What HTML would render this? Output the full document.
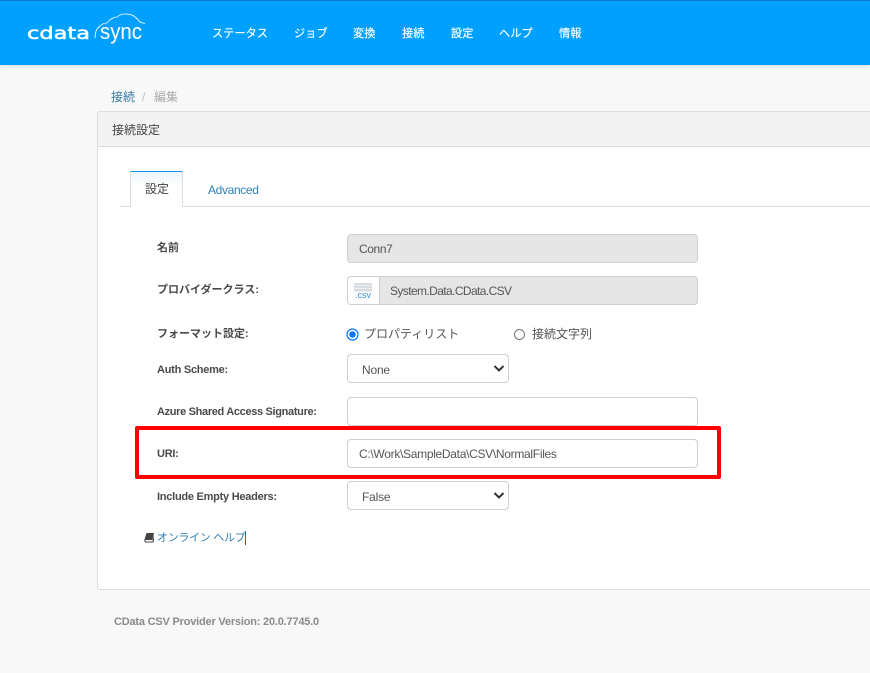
<!DOCTYPE html>
<html lang="ja"><head><meta charset="utf-8"><title>CData Sync</title>
<style>
html,body{margin:0;padding:0}
body{width:870px;height:673px;overflow:hidden;position:relative;background:#f8f8f8;font-family:"Liberation Sans","Noto Sans CJK JP",sans-serif;font-size:12px;color:#444}
.a{position:absolute;white-space:nowrap}
#top{left:0;top:0;width:870px;height:65px;background:#00a0ff;border-top:1px solid #0a78c8;box-sizing:border-box;box-shadow:0 1px 3px rgba(0,0,0,.12)}
.n{top:26px;color:#fff;font-size:11.2px;line-height:16px;-webkit-text-stroke:.15px #fff}
#panel{left:97px;top:111px;width:780px;height:479px;background:#fff;border:1px solid #ddd;border-radius:3px;box-sizing:border-box}
#phead{left:98px;top:112px;width:772px;height:34px;background:#f3f3f3;border-bottom:1px solid #ddd}
.l{left:157px;font-size:11px;font-weight:bold;color:#4a4a4a;line-height:16px}
.e{letter-spacing:-.25px;margin-top:1px}
.f{box-sizing:border-box;border:1px solid #cfcfcf;border-radius:4px;left:347px;background:#fff;font-size:12px;color:#555;padding-left:11px}
.g{background:#e6e6e6}
.s{width:162px;height:29px;line-height:30px;padding-left:14px;letter-spacing:-.2px}
.s svg{position:absolute;right:3px;top:9px}
</style></head><body>
<div class="a" id="top"></div>
<svg class="a" style="left:24px;top:10px" width="125" height="40" viewBox="0 0 125 40">
<text x="3" y="29" font-family="DejaVu Sans" font-size="17" fill="#fff" stroke="#fff" stroke-width=".5" textLength="63" lengthAdjust="spacingAndGlyphs">cdata</text>
<text x="76" y="29" font-family="Liberation Sans" font-size="22" fill="#fff" textLength="42" lengthAdjust="spacingAndGlyphs">sync</text>
<path d="M71 28C71 22 73 18 76 16C78 14 81 13 83 13C86 9 90 7 93 7C95 5 98 4 101 4C105 4 109 5 111 7C114 9 115 11 116 12C118 13 120 13 121 14" fill="none" stroke="#fff" stroke-width=".8"/>
</svg>
<div class="a n" style="left:212px">ステータス</div>
<div class="a n" style="left:294px">ジョブ</div>
<div class="a n" style="left:353px">変換</div>
<div class="a n" style="left:402px">接続</div>
<div class="a n" style="left:451px">設定</div>
<div class="a n" style="left:499px">ヘルプ</div>
<div class="a n" style="left:559px">情報</div>

<div class="a" style="left:111px;top:89px;line-height:16px;color:#3a7ca5">接続</div>
<div class="a" style="left:142px;top:89px;line-height:16px;color:#bbb">/</div>
<div class="a" style="left:154px;top:89px;line-height:16px;color:#aaa">編集</div>

<div class="a" id="panel"></div>
<div class="a" id="phead"></div>
<div class="a" style="left:112px;top:122px;line-height:16px;color:#444">接続設定</div>

<div class="a" style="left:120px;top:206px;width:750px;height:1px;background:#ddd"></div>
<div class="a" style="left:130px;top:171px;width:53px;height:36px;box-sizing:border-box;background:linear-gradient(#eaf5fd,#fff 40%);border:1px solid #ddd;border-top:1px solid #1a94e0;border-bottom:0"></div>
<div class="a" style="left:145px;top:181px;line-height:16px;color:#444">設定</div>
<div class="a" style="left:208px;top:182px;line-height:16px;color:#2f7fb5;letter-spacing:-.35px">Advanced</div>

<div class="a l" style="top:240px">名前</div>
<div class="a f g" style="top:234px;width:351px;height:29px;line-height:28px;letter-spacing:-.4px">Conn7</div>

<div class="a l" style="top:282px">プロバイダークラス:</div>
<div class="a f g" style="top:276px;width:351px;height:29px;line-height:28px;padding-left:42px;overflow:hidden;letter-spacing:-.6px">System.Data.CData.CSV
<div class="a" style="left:0;top:0;width:31px;height:27px;background:#fff;border-right:1px solid #cfcfcf;letter-spacing:0">
<div class="a" style="left:6px;top:6px;width:18px;height:9px;background:repeating-linear-gradient(#d8dde4 0 2px,#eceef1 2px 3px)"></div>
<div class="a" style="left:7px;top:13px;font-size:9px;line-height:10px;color:#2f8fd0">.csv</div>
</div></div>

<div class="a l" style="top:326px">フォーマット設定:</div>
<svg class="a" style="left:346px;top:328px" width="13" height="13"><circle cx="6.5" cy="6.5" r="5.5" fill="#fff" stroke="#0075ff" stroke-width="1.2"/><circle cx="6.5" cy="6.5" r="3.2" fill="#0075ff"/></svg>
<div class="a" style="left:364px;top:326px;line-height:16px;color:#555">プロパティリスト</div>
<svg class="a" style="left:513px;top:328px" width="13" height="13"><circle cx="6.5" cy="6.5" r="5" fill="#fff" stroke="#777" stroke-width="1"/></svg>
<div class="a" style="left:532px;top:326px;line-height:16px;color:#555">接続文字列</div>

<div class="a l e" style="top:361px">Auth Scheme:</div>
<div class="a f s" style="top:354px">None<svg width="12" height="9" viewBox="0 0 12 9"><path d="M1.5 2L6 6.5L10.5 2" fill="none" stroke="#333" stroke-width="2"/></svg></div>

<div class="a l e" style="top:403px;letter-spacing:-.33px">Azure Shared Access Signature:</div>
<div class="a f" style="top:397px;width:351px;height:29px"></div>

<div class="a l e" style="top:445px">URI:</div>
<div class="a f" style="top:439px;width:351px;height:29px;line-height:28px;letter-spacing:-.3px">C:\Work\SampleData\CSV\NormalFiles</div>

<div class="a l e" style="top:488px">Include Empty Headers:</div>
<div class="a f s" style="top:481px">False<svg width="12" height="9" viewBox="0 0 12 9"><path d="M1.5 2L6 6.5L10.5 2" fill="none" stroke="#333" stroke-width="2"/></svg></div>

<div class="a" style="left:135px;top:426px;width:586px;height:53px;box-sizing:border-box;border:4px solid #f00;border-radius:2px"></div>

<svg class="a" style="left:144px;top:532px" width="11" height="11" viewBox="0 0 11 11"><path d="M2.5 1H10L8.5 8H2C1 8 1 9.5 2 9.5H8.5L10 3V9L9 10.5H2C.5 10.5 0 9 .5 7.5Z" fill="#444"/></svg>
<div class="a" style="left:157px;top:530px;line-height:16px;font-size:11px;letter-spacing:-.3px;color:#2f7fb5">オンライン ヘルプ</div>
<div class="a" style="left:245px;top:531px;width:1px;height:14px;background:#1a6fa8"></div>

<div class="a" style="left:114px;top:614px;line-height:16px;font-size:11px;font-weight:bold;letter-spacing:-.2px;color:#8a8a8a">CData CSV Provider Version: 20.0.7745.0</div>
</body></html>
